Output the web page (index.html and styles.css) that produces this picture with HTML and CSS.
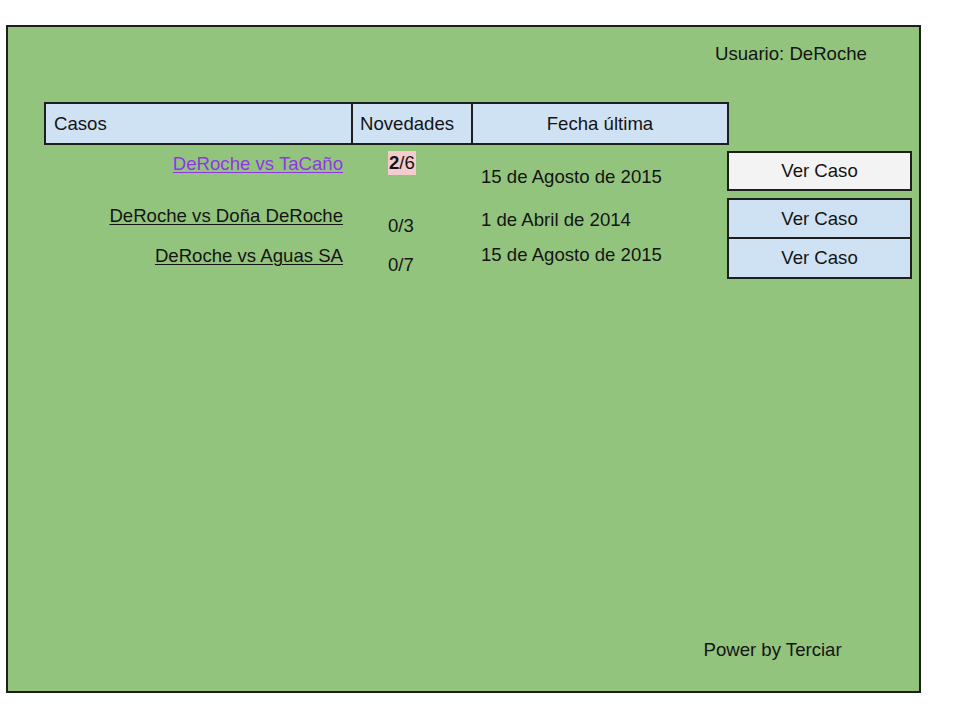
FILE: index.html
```html
<!DOCTYPE html>
<html lang="es">
<head>
<meta charset="utf-8">
<title>Casos</title>
<link rel="stylesheet" href="styles.css">
</head>
<body>
<div class="frame">
  <div class="user">Usuario: DeRoche</div>

  <div class="head">
    <div class="head-cell head-cell--casos">Casos</div>
    <div class="head-cell head-cell--nov">Novedades</div>
    <div class="head-cell head-cell--fecha">Fecha última</div>
  </div>

  <div class="rows">
    <div class="case-row case-row--1">
      <div class="cell-case"><a class="case-link case-link--visited" href="#">DeRoche vs TaCaño</a></div>
      <div class="cell-count"><span class="count-new"><b>2</b>/6</span></div>
      <div class="cell-date">15 de Agosto de 2015</div>
      <div class="btn btn--light">Ver Caso</div>
    </div>
    <div class="case-row case-row--2">
      <div class="cell-case"><a class="case-link" href="#">DeRoche vs Doña DeRoche</a></div>
      <div class="cell-count">0/3</div>
      <div class="cell-date">1 de Abril de 2014</div>
      <div class="btn">Ver Caso</div>
    </div>
    <div class="case-row case-row--3">
      <div class="cell-case"><a class="case-link" href="#">DeRoche vs Aguas SA</a></div>
      <div class="cell-count">0/7</div>
      <div class="cell-date">15 de Agosto de 2015</div>
      <div class="btn btn--joined">Ver Caso</div>
    </div>
  </div>

  <div class="footer">Power by Terciar</div>
</div>
</body>
</html>
```

FILE: styles.css
```css
* { box-sizing: border-box; }

html, body {
  margin: 0;
  padding: 0;
  background: #ffffff;
}

body {
  font-family: "Liberation Sans", Arial, sans-serif;
  font-size: 18.6px;
  line-height: 22px;
  color: #141414;
}

.frame {
  margin: 25px 0 0 6px;
  width: 915px;
  height: 668px;
  background: #93c47d;
  border: 2px solid #1e1e1e;
  display: flex;
  flex-direction: column;
}

.user {
  padding: 16px 0 0 707px;
  white-space: nowrap;
}

.head {
  display: flex;
  margin: 37px 0 0 36px;
  height: 43px;
}

.head-cell {
  height: 43px;
  background: #cfe2f3;
  border: 2px solid #1e1e1e;
  display: flex;
  align-items: center;
  white-space: nowrap;
}

.head-cell--casos {
  width: 309px;
  padding-left: 8px;
}

.head-cell--nov {
  width: 122px;
  margin-left: -2px;
  padding-left: 7px;
}

.head-cell--fecha {
  width: 258px;
  margin-left: -2px;
  justify-content: center;
}

.rows {
  margin: 6px 0 0 36px;
  display: flex;
  flex-direction: column;
}

.case-row {
  display: grid;
  grid-template-columns: 309px 120px 254px 185px;
  align-items: start;
  white-space: nowrap;
}

.cell-case {
  text-align: right;
  padding-right: 10px;
}

.cell-count {
  padding-left: 35px;
}

.cell-date {
  padding-left: 8px;
}

.case-link {
  color: #141414;
  text-decoration: underline;
  text-decoration-thickness: 1px;
  text-underline-offset: 2px;
}

.case-link--visited {
  color: #9036e8;
}

.count-new {
  background: #f4cccc;
  padding: 1px 1px 2px;
}

.count-new b {
  font-weight: bold;
}

.btn {
  height: 41px;
  border: 2px solid #1e1e1e;
  background: #cfe2f3;
  display: flex;
  align-items: center;
  justify-content: center;
}

.btn--light {
  height: 40px;
  background: #f3f3f3;
}

.btn--joined {
  height: 40px;
  border-top: 0;
}

/* row 1 */
.case-row--1 { height: 47px; }
.case-row--1 .cell-case { padding-top: 1.5px; }
.case-row--1 .cell-count { padding-top: 0.5px; }
.case-row--1 .cell-date { padding-top: 14.5px; }

/* row 2 */
.case-row--2 { height: 41px; }
.case-row--2 .cell-case { padding-top: 7px; }
.case-row--2 .cell-count { padding-top: 16.5px; }
.case-row--2 .cell-date { padding-top: 10.5px; }

/* row 3 */
.case-row--3 { height: 40px; }
.case-row--3 .cell-case { padding-top: 6px; }
.case-row--3 .cell-count { padding-top: 15px; }
.case-row--3 .cell-date { padding-top: 5px; }

.footer {
  margin-top: auto;
  padding: 0 0 30.5px 695.5px;
  white-space: nowrap;
}
```
